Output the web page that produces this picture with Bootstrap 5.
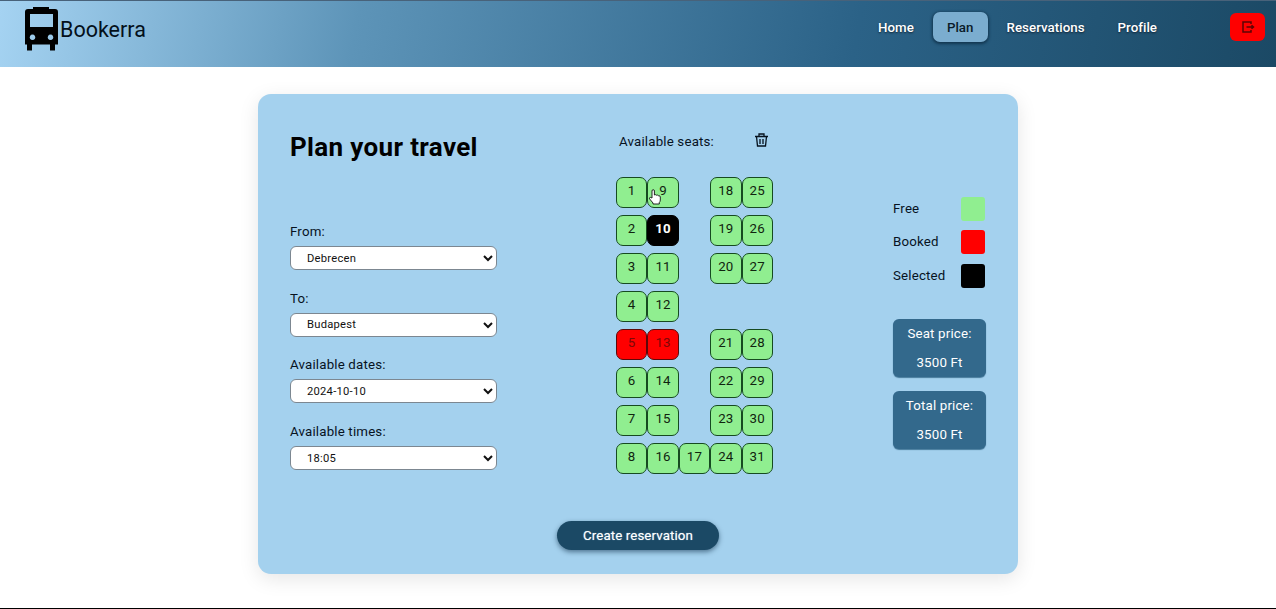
<!DOCTYPE html>
<html lang="en">
<head>
<meta charset="utf-8">
<meta name="viewport" content="width=device-width, initial-scale=1">
<title>Bookerra</title>
<link href="https://cdn.jsdelivr.net/npm/bootstrap@5.3.0/dist/css/bootstrap.min.css" rel="stylesheet">
<style>
body{font-family:Roboto,"Liberation Sans",sans-serif;font-size:13.3px;letter-spacing:.17px;line-height:20px;color:#07131f;background:#fff;height:609px;overflow:hidden;border-bottom:1px solid #000}
.topbar{height:67px;background:linear-gradient(100deg,#a5d3f2 0%,#5d94b8 28%,#2b6287 67%,#1b4965 100%);border-top:1px solid #48627a;padding:0 11px 0 20px}
.brand{font-size:21.5px;letter-spacing:0;color:#04101a;height:57px}
.brand svg{width:42px;height:45px;margin-right:-2px}
.menu{height:31px;margin-top:11px}
.menu a{color:#fff;font-weight:500;letter-spacing:.04px;text-decoration:none;border-radius:7px;height:30px;line-height:31px;padding:0 14px;margin-right:5px;text-shadow:0 1px 2px #123}
.menu a.current{background:#7badcf;color:#0a1b29;text-shadow:none;box-shadow:0 1px 3px 1px #123650}
.menu a.final{margin-right:0}
.exit{width:35px;height:28px;margin-top:1px;border-radius:6px;background:#f00;border:0;margin-left:59px}
.planner{width:760px;height:480px;margin:27px auto 0;border-radius:13px;background:#a4d1ee;box-shadow:0 5px 20px rgba(0,0,0,.1);padding:0 32px}
.planner-body{height:426.500px}
.form-col{width:207px;padding-top:37px}
.form-col h1{font-size:26px;font-weight:700;letter-spacing:.35px;line-height:32px;margin:0 0 59px;color:#000;white-space:nowrap}
.field{height:66.7px}
.field label{display:block;line-height:20px;margin-bottom:4px}
.field select{display:block;width:207px;height:24px;border:1px solid #7c8791;border-radius:6px;background:#fff;font-size:11.2px;letter-spacing:.25px;padding:0 0 0 12px;color:#111}
.seat-col{width:157px;margin-left:119px;padding-top:38px}
.seat-head{height:22px;margin-bottom:22.500px;padding:0 4px 0 3px}
.seats{display:grid;grid-template-columns:repeat(5,31.4px);grid-auto-rows:31.500px;row-gap:6.500px}
.seat{border:1px solid #164a20;border-radius:7px;background:#90ee90;text-align:center;line-height:26px;color:#10240f;position:relative}
.seat.taken{background:#f00;color:#7c0808;border-color:#5d0909}
.seat.chosen{background:#000;color:#fff;font-weight:700;border-color:#000}
.hand{position:absolute;left:0;top:11px;width:14px;height:16px}
.side-col{width:93px;margin-left:120px;padding-top:103px}
.key{height:24px;margin-bottom:9.3px}
.swatch{width:24px;height:24px;border-radius:3px;margin-right:1px}
.price{width:93px;height:58px;background:#33698c;color:#fff;border-radius:6px;margin-bottom:14px;text-align:center;line-height:29px;box-shadow:0 1px 1px #477a9b}
.create{width:162px;height:29px;border:0;border-radius:15px;background:#1b4965;color:#fff;font-size:13.3px;letter-spacing:.1px;font-weight:400;text-shadow:0 0 1px #9bc;box-shadow:0 2px 5px rgba(10,40,65,.55);padding:1px 0 0}
</style>
</head>
<body>
<header class="topbar d-flex align-items-start">
  <div class="brand d-flex align-items-center me-auto">
    <svg viewBox="0 0 42 45"><path fill="#000" fill-rule="evenodd" d="M13 0h16v2h6q3 0 3 3v32.500h-3v6h-5v-6H12v6H7v-6H5V5q0-3 3-3h5zM10 7v13h23V7zM12.500 27.500a2.800 2.800 0 1 0 .01 0zM30.500 27.500a2.800 2.800 0 1 0 .01 0z"/></svg><span>Bookerra</span>
  </div>
  <nav class="menu d-flex">
    <a href="#">Home</a>
    <a href="#" class="current">Plan</a>
    <a href="#">Reservations</a>
    <a href="#" class="final">Profile</a>
    <button class="exit d-flex align-items-center justify-content-center p-0" aria-label="Log out"><svg width="14" height="14" viewBox="0 0 14 14" fill="none" stroke="#5c0505" stroke-width="1.500"><path d="M10 4V2H2v10h8v-2M5.500 7h7M10.500 5.200 12.500 7l-2 1.800"/></svg></button>
  </nav>
</header>
<main class="planner">
  <div class="planner-body d-flex">
    <section class="form-col">
      <h1>Plan your travel</h1>
      <div class="field"><label for="from">From:</label><select id="from"><option>Debrecen</option></select></div>
      <div class="field"><label for="to">To:</label><select id="to"><option>Budapest</option></select></div>
      <div class="field"><label for="date">Available dates:</label><select id="date"><option>2024-10-10</option></select></div>
      <div class="field"><label for="time">Available times:</label><select id="time"><option>18:05</option></select></div>
    </section>
    <section class="seat-col">
      <div class="seat-head d-flex justify-content-between align-items-start"><span>Available seats:</span>
        <svg width="15" height="17" viewBox="0 0 15 17" fill="none" stroke="#06121e" stroke-width="1.300"><path d="M1 4.500h13M5 4V2h5v2M2.500 4.500l1 9.500h8l1-9.500M6 7v5M9 7v5"/></svg></div>
      <div class="seats" id="seats"></div>
    </section>
    <aside class="side-col">
      <div class="key d-flex justify-content-between align-items-center"><span>Free</span><i class="swatch" style="background:#90ee90"></i></div>
      <div class="key d-flex justify-content-between align-items-center"><span>Booked</span><i class="swatch" style="background:#f00"></i></div>
      <div class="key d-flex justify-content-between align-items-center mb-0"><span>Selected</span><i class="swatch" style="background:#000"></i></div>
      <div class="price" style="margin-top:31px">Seat price:<br>3500 Ft</div>
      <div class="price">Total price:<br>3500 Ft</div>
    </aside>
  </div>
  <div class="d-flex justify-content-center"><button class="create">Create reservation</button></div>
</main>
<script src="https://cdn.jsdelivr.net/npm/bootstrap@5.3.0/dist/js/bootstrap.bundle.min.js"></script>
<script>
const rows=[[1,9,0,18,25],[2,10,0,19,26],[3,11,0,20,27],[4,12,0,0,0],[5,13,0,21,28],[6,14,0,22,29],[7,15,0,23,30],[8,16,17,24,31]];
const hand='<svg class="hand" viewBox="0 0 14 16"><path fill="#fff" stroke="#111" stroke-width=".9" stroke-linejoin="round" d="M4 9V2q0-1.300 1.200-1.300T6.400 2v4q1-.8 2 .2 1.200-.5 2 .5 1.800-.3 1.900 1.300v3q0 1.500-1 2.500v1.500H5V14L1.500 9.800q-.3-1.400 1-1.400z"/></svg>';
document.getElementById('seats').innerHTML=rows.flat().map(n=>n?`<div class="seat${n===5||n===13?' taken':n===10?' chosen':''}">${n}${n===9?hand:''}</div>`:'<div></div>').join('');
</script>
</body>
</html>
